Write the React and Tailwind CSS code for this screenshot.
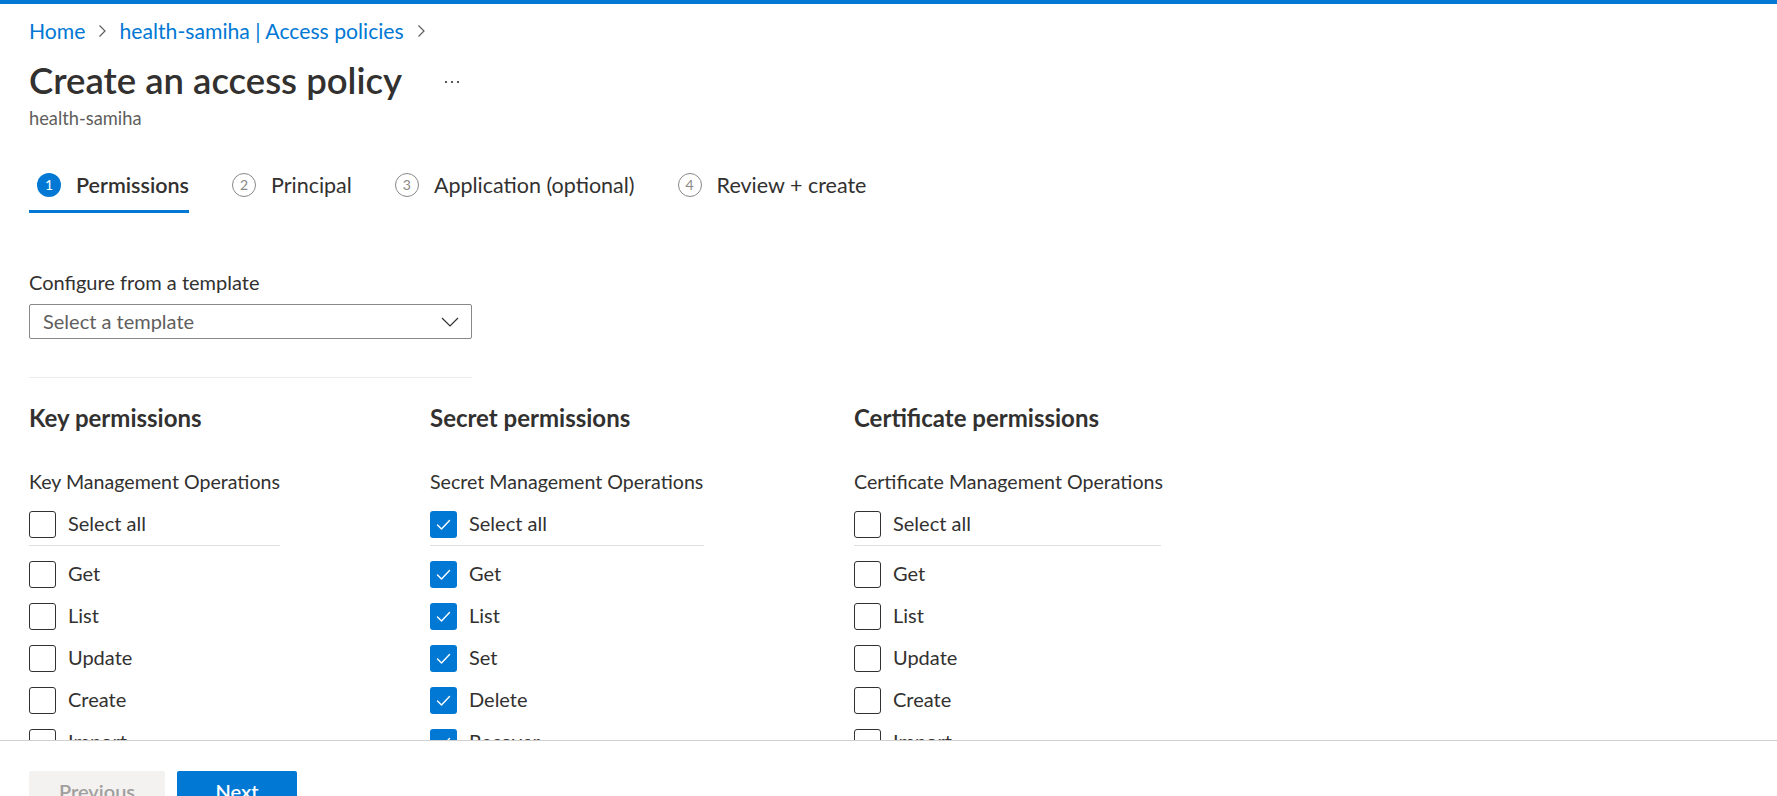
import React from "react";

const Check = () => (
  <svg width="27" height="27" viewBox="0 0 27 27" className="block">
    <polyline points="7.5,14 11.5,18 19.5,9.5" fill="none" stroke="#ffffff" strokeWidth="1.4" strokeLinecap="round" strokeLinejoin="round" />
  </svg>
);

function Box({ checked }) {
  return checked ? (
    <div className="w-[27px] h-[27px] rounded-[3px] bg-[#0078d4] shrink-0">
      <Check />
    </div>
  ) : (
    <div className="w-[27px] h-[27px] rounded-[3px] border border-[#323130] bg-white shrink-0" />
  );
}

function Row({ label, checked }) {
  return (
    <div className="flex items-center gap-[12px] h-[27px]">
      <Box checked={checked} />
      <span className="text-[20px] leading-[25px] pb-[2px] text-[#323130]">{label}</span>
    </div>
  );
}

function Column({ width, lineWidth, title, ops, items, checked }) {
  return (
    <div className={`shrink-0 ${width}`}>
      <div className="text-[24px] leading-[32px] font-bold text-[#323130]">{title}</div>
      <div className="mt-[34px] text-[19.6px] leading-[28px] text-[#323130] whitespace-nowrap">{ops}</div>
      <div className={`mt-[15px] ${lineWidth}`}>
        <Row label="Select all" checked={checked} />
        <div className="mt-[7px] h-px bg-[#e1dfdd]" />
      </div>
      <div className="mt-[15px] flex flex-col gap-[15px]">
        {items.map((it) => (
          <Row key={it} label={it} checked={checked} />
        ))}
      </div>
    </div>
  );
}

function Step({ n, label, active }) {
  return (
    <div className={`flex items-center pb-[12px] border-b-[3px] ${active ? "border-[#0078d4]" : "border-transparent"}`}>
      <div
        className={`ml-[8px] w-[24px] h-[24px] rounded-full flex items-center justify-center text-[14px] leading-none ${
          active ? "bg-[#0078d4] text-white" : "border border-[#8a8886] text-[#8a8886]"
        }`}
      >
        {n}
      </div>
      <span className={`ml-[15px] text-[21.5px] leading-[26px] text-[#323130] ${active ? "font-semibold" : ""}`}>{label}</span>
    </div>
  );
}

const Chevron = () => (
  <svg width="10" height="14" viewBox="0 0 10 14" className="block">
    <polyline points="2.5,1.5 8,7 2.5,12.5" fill="none" stroke="#605e5c" strokeWidth="1.2" />
  </svg>
);

export default function App() {
  return (
    <div className="h-[796px] w-full overflow-hidden bg-white flex flex-col font-['Lato','Segoe_UI',sans-serif] text-[#323130]">
      <div className="h-[4px] bg-[#0078d4] shrink-0" />
      <div className="h-[736px] shrink-0 overflow-hidden px-[29px]">
        {/* Breadcrumb */}
        <div className="mt-[13px] flex items-center h-[28px] text-[21.2px] leading-[28px] text-[#0078d4]">
          <span>Home</span>
          <span className="mx-[12px]"><Chevron /></span>
          <span>health-samiha | Access policies</span>
          <span className="mx-[12px]"><Chevron /></span>
        </div>
        {/* Title */}
        <div className="mt-[13px] flex items-center h-[44px]">
          <h1 className="text-[36.5px] leading-[44px] font-semibold text-[#323130]">Create an access policy</h1>
          <svg width="16" height="4" viewBox="0 0 16 4" className="ml-[42px] mt-[4px]">
            <circle cx="2" cy="2" r="1.1" fill="#323130" />
            <circle cx="8" cy="2" r="1.1" fill="#323130" />
            <circle cx="14" cy="2" r="1.1" fill="#323130" />
          </svg>
        </div>
        <div className="mt-[4px] text-[18.3px] leading-[24px] text-[#605e5c]">health-samiha</div>

        {/* Tabs */}
        <div className="mt-[42px] flex items-end gap-[35px]">
          <Step n="1" label="Permissions" active />
          <Step n="2" label="Principal" />
          <Step n="3" label="Application (optional)" />
          <Step n="4" label="Review + create" />
        </div>

        {/* Template */}
        <div className="mt-[55px] text-[20px] leading-[28px] text-[#323130]">Configure from a template</div>
        <div className="mt-[8px] w-[443px] h-[35px] border border-[#8a8886] rounded-[2px] flex items-center justify-between pl-[13px] pr-[12px]">
          <span className="text-[20px] leading-[26px] pb-[2px] text-[#605e5c]">Select a template</span>
          <svg width="18" height="10" viewBox="0 0 18 10" className="block">
            <polyline points="1,1 9,9 17,1" fill="none" stroke="#323130" strokeWidth="1.2" />
          </svg>
        </div>
        <div className="mt-[38px] w-[443px] h-px bg-[#edebe9]" />

        {/* Permissions */}
        <div className="mt-[24px] flex">
          <Column
            width="w-[401px]"
            lineWidth="w-[251px]"
            title="Key permissions"
            ops="Key Management Operations"
            items={["Get", "List", "Update", "Create", "Import", "Delete", "Recover", "Backup", "Restore"]}
            checked={false}
          />
          <Column
            width="w-[424px]"
            lineWidth="w-[274px]"
            title="Secret permissions"
            ops="Secret Management Operations"
            items={["Get", "List", "Set", "Delete", "Recover", "Backup", "Restore"]}
            checked={true}
          />
          <Column
            width="w-[420px]"
            lineWidth="w-[307px]"
            title="Certificate permissions"
            ops="Certificate Management Operations"
            items={["Get", "List", "Update", "Create", "Import", "Delete", "Recover", "Backup", "Restore"]}
            checked={false}
          />
        </div>
      </div>
      {/* Footer */}
      <div className="shrink-0 border-t border-[#d2d0ce] px-[29px] pt-[30px]">
        <div className="flex gap-[12px]">
          <div className="w-[136px] h-[40px] rounded-[2px] bg-[#f3f2f1] text-[#a19f9d] text-[20px] font-semibold flex items-center justify-center">
            Previous
          </div>
          <div className="w-[120px] h-[40px] rounded-[2px] bg-[#0078d4] text-white text-[20px] font-semibold flex items-center justify-center">
            Next
          </div>
        </div>
      </div>
    </div>
  );
}
